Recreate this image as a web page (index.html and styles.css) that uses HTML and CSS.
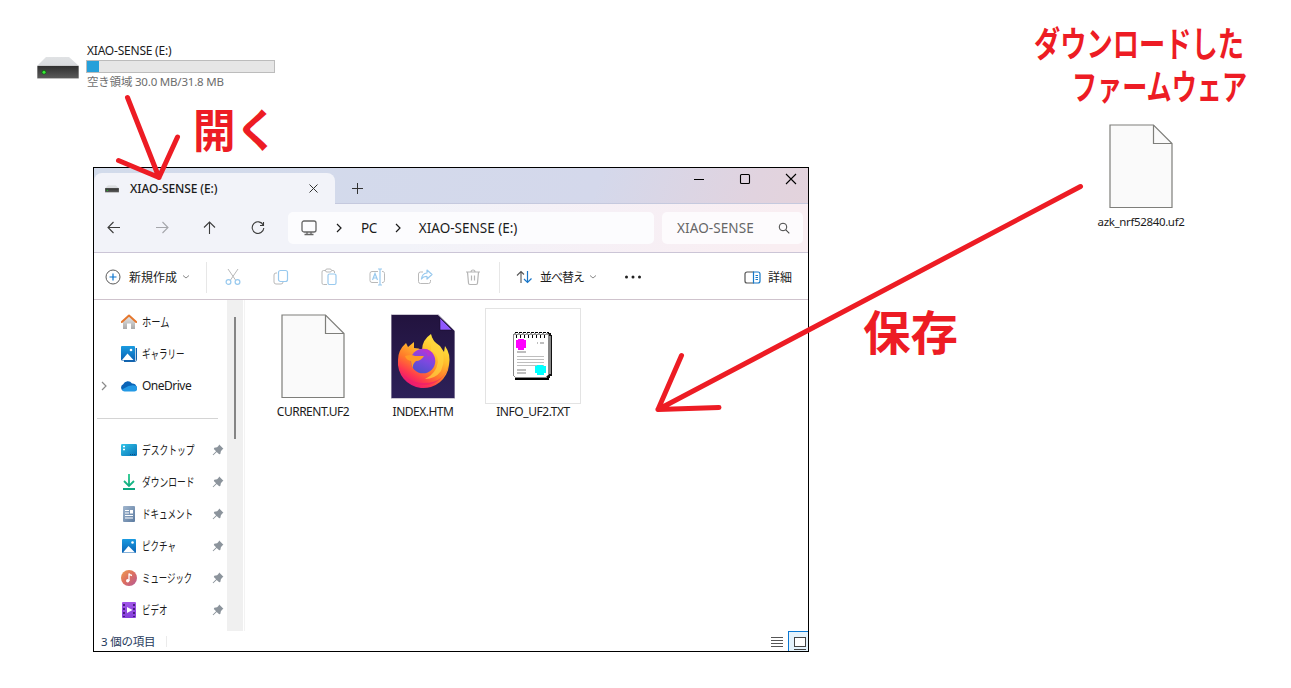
FILE: index.html
```html
<!DOCTYPE html>
<html lang="ja">
<head>
<meta charset="utf-8">
<title>XIAO-SENSE</title>
<link rel="stylesheet" href="styles.css">
</head>
<body>
<svg width="0" height="0" class="defs">
  <defs>
    <linearGradient id="gTop" x1="0" y1="0" x2="0" y2="1"><stop offset="0" stop-color="#e0e2e4"/><stop offset="1" stop-color="#d8dade"/></linearGradient>
    <linearGradient id="gFront" x1="0" y1="0" x2="0" y2="1"><stop offset="0" stop-color="#303030"/><stop offset="1" stop-color="#5a5a5a"/></linearGradient>
    <linearGradient id="gBlue" x1="0" y1="0" x2="0" y2="1"><stop offset="0" stop-color="#1a9be0"/><stop offset="1" stop-color="#0a62b4"/></linearGradient>
    <linearGradient id="gDesk" x1="0" y1="0" x2="1" y2="1"><stop offset="0" stop-color="#32c5e8"/><stop offset="1" stop-color="#0873b8"/></linearGradient>
    <linearGradient id="gDown" gradientUnits="userSpaceOnUse" x1="0" y1="0" x2="0" y2="16"><stop offset="0" stop-color="#25c98c"/><stop offset="1" stop-color="#0ba47e"/></linearGradient>
    <linearGradient id="gDoc" x1="0" y1="0" x2="1" y2="1"><stop offset="0" stop-color="#a1b6ce"/><stop offset="1" stop-color="#5c7ba0"/></linearGradient>
    <linearGradient id="gMusic" x1="0" y1="0" x2="1" y2="1"><stop offset="0" stop-color="#f0a050"/><stop offset=".5" stop-color="#db6d61"/><stop offset="1" stop-color="#b45a9a"/></linearGradient>
    <linearGradient id="gVideo" x1="0" y1="0" x2="0" y2="1"><stop offset="0" stop-color="#a155e8"/><stop offset="1" stop-color="#8540da"/></linearGradient>
    <linearGradient id="gHouse" x1="0" y1="0" x2="0" y2="1"><stop offset="0" stop-color="#e8e8e8"/><stop offset="1" stop-color="#a9a9a9"/></linearGradient>
    <linearGradient id="gNight" x1="0" y1="0" x2="0" y2="1"><stop offset="0" stop-color="#22133e"/><stop offset="1" stop-color="#2d2159"/></linearGradient>
    <linearGradient id="gFlame" x1=".85" y1=".05" x2=".3" y2="1"><stop offset="0" stop-color="#fff044"/><stop offset=".35" stop-color="#ffbd2c"/><stop offset=".62" stop-color="#ff7a2a"/><stop offset=".82" stop-color="#ff3750"/><stop offset="1" stop-color="#e5127a"/></linearGradient>
    <linearGradient id="gGlobe" x1=".7" y1="0" x2=".3" y2="1"><stop offset="0" stop-color="#b833d8"/><stop offset=".5" stop-color="#7a49df"/><stop offset="1" stop-color="#4c50c9"/></linearGradient>
    <symbol id="drive" viewBox="0 0 42 23">
      <path d="M9 0H32L42 9H0Z" fill="url(#gTop)"/>
      <rect y="8.5" width="42" height="13.5" rx="1" fill="#bcbcbc"/>
      <rect x=".5" y="9" width="41" height="12" fill="url(#gFront)"/>
      <circle cx="7" cy="15.2" r="2.4" fill="#18651b"/><circle cx="7" cy="15.2" r="1.5" fill="#37ed36"/>
    </symbol>
    <symbol id="page" viewBox="0 0 64 85">
      <path d="M1 1H44.500L63 19.500V83.500H1Z" fill="#fafafa" stroke="#7e7e7a" stroke-width="1.200"/>
      <path d="M44.500 1V19.500H63" fill="none" stroke="#7e7e7a" stroke-width="1.200"/>
    </symbol>
    <symbol id="pin" viewBox="0 0 12 12">
      <path d="M7.200 .6L11.400 4.800L10.300 5.600L8.900 7.200L8.300 10L7.200 10.300L4.700 7.900L1.300 11.200L.6 10.700L4.100 7.200L1.800 4.900L2.300 3.800L5.100 3.200L6.600 1.800Z" fill="#8c949c"/>
    </symbol>
    <symbol id="chev" viewBox="0 0 8 8"><path d="M1 2.500L4 5L7 2.500" fill="none" stroke="#8a8a8a"/></symbol>
    <symbol id="next" viewBox="0 0 8 10"><path d="M2 1L6 5L2 9" fill="none" stroke="currentColor" stroke-width="1.200"/></symbol>
  </defs>
</svg>

<main class="canvas">
  <section class="drive">
    <svg class="drive-icon"><use href="#drive"/></svg>
    <div class="drive-info">
      <div class="drive-name">XIAO-SENSE (E:)</div>
      <div class="meter"><div class="meter-fill"></div></div>
      <div class="drive-free"><span class="cjk">空き領域</span> 30.0 MB/31.8 MB</div>
    </div>
  </section>

  <section class="window">
    <header class="titlebar">
      <div class="tab">
        <svg class="tab-icon"><use href="#drive"/></svg>
        <span class="tab-title">XIAO-SENSE (E:)</span>
        <svg class="tab-close" viewBox="0 0 9 9"><path d="M.5 .5L8.500 8.500M8.500 .5L.5 8.500" stroke="#333" stroke-width="1"/></svg>
      </div>
      <svg class="new-tab" viewBox="0 0 11 11"><path d="M5.500 0V11M0 5.500H11" stroke="#333"/></svg>
      <div class="controls">
        <svg viewBox="0 0 12 12"><path d="M1 6.500H11" stroke="#000"/></svg>
        <svg viewBox="0 0 12 12"><rect x="1.500" y="1.500" width="9" height="9" rx="1" fill="none" stroke="#000" stroke-width="1.100"/></svg>
        <svg viewBox="0 0 12 12"><path d="M1 1L11 11M11 1L1 11" stroke="#000" stroke-width="1.100"/></svg>
      </div>
    </header>

    <nav class="address-row">
      <div class="nav-buttons">
        <svg viewBox="0 0 16 16"><path d="M14 7.500H2M7.500 2L2 7.500L7.500 13" class="ink"/></svg>
        <svg viewBox="0 0 16 16"><path d="M2 7.500H14M8.500 2L14 7.500L8.500 13" class="ink faded"/></svg>
        <svg viewBox="0 0 16 16"><path d="M7.500 14V2M2 7.500L7.500 2L13 7.500" class="ink"/></svg>
        <svg viewBox="0 0 16 16"><path d="M13.200 5A5.800 5.800 0 1 0 13.800 8M13.500 2V5.500H10" class="ink"/></svg>
      </div>
      <div class="crumbs">
        <svg class="pc" viewBox="0 0 16 16"><rect x="1" y="1" width="14" height="11" rx="2" fill="none" stroke="#666" stroke-width="1.300"/><path d="M6 12V14.500M10 12V14.500M3.500 14.500H12.500" stroke="#666" stroke-width="1.300"/></svg>
        <svg class="next"><use href="#next"/></svg>
        <span>PC</span>
        <svg class="next"><use href="#next"/></svg>
        <span class="crumb-drive">XIAO-SENSE (E:)</span>
      </div>
      <div class="search">
        <span>XIAO-SENSE</span>
        <svg viewBox="0 0 12 12"><circle cx="5" cy="5" r="3.800" fill="none" stroke="#444"/><path d="M7.800 7.800L11.300 11.300" stroke="#444" stroke-width="1.100"/></svg>
      </div>
    </nav>

    <div class="toolbar">
      <div class="new">
        <svg viewBox="0 0 16 16"><circle cx="8" cy="8" r="7" fill="none" stroke="#5b5b5b"/><path d="M8 4.500V11.500M4.500 8H11.500" stroke="#0a74cf" stroke-width="1.200"/></svg>
        <span class="cjk">新規作成</span>
        <svg class="chev"><use href="#chev"/></svg>
      </div>
      <div class="actions">
        <svg viewBox="0 0 18 18"><path d="M4 1L11.500 12M14 1L6.500 12" fill="none" stroke="#b9b9b9"/><circle cx="4.500" cy="14" r="2.400" fill="none" stroke="#98c9ee" stroke-width="1.200"/><circle cx="13.500" cy="14" r="2.400" fill="none" stroke="#98c9ee" stroke-width="1.200"/></svg>
        <svg viewBox="0 0 18 18"><path d="M5 5H4A2 2 0 0 0 2 7V14A2 2 0 0 0 4 16H9A2 2 0 0 0 11 14" fill="none" stroke="#b9b9b9"/><rect x="6.500" y="2.500" width="9" height="11" rx="2" fill="none" stroke="#98c9ee" stroke-width="1.200"/></svg>
        <svg viewBox="0 0 18 18"><path d="M6 2.500H3.500A1.500 1.500 0 0 0 2 4V15A1.500 1.500 0 0 0 3.500 16.500H7M12 2.500H13A1.500 1.500 0 0 1 14.500 4V5" fill="none" stroke="#b9b9b9"/><rect x="5.500" y="1" width="6" height="3" rx="1.500" fill="none" stroke="#b9b9b9"/><rect x="8" y="6" width="8" height="10.500" rx="1.500" fill="none" stroke="#98c9ee" stroke-width="1.200"/></svg>
        <svg viewBox="0 0 18 18"><path d="M10 3.500H4A2 2 0 0 0 2 5.500V12.500A2 2 0 0 0 4 14.500H10M14 3.500A2 2 0 0 1 16.500 5.500V12.500A2 2 0 0 1 14 14.500" fill="none" stroke="#b9b9b9"/><path d="M12 1V17M10 1H14M10 17H14M4.500 12L7 5.500L9.500 12M5.500 10H8.500" fill="none" stroke="#98c9ee" stroke-width="1.200"/></svg>
        <svg viewBox="0 0 18 18"><path d="M7 4H4.500A2 2 0 0 0 2.500 6V13.500A2 2 0 0 0 4.500 15.500H12.500A2 2 0 0 0 14.500 13.500V12" fill="none" stroke="#b9b9b9"/><path d="M11 2L16 6.500L11 11V8.500Q7.500 8.200 5.500 11Q6 5.500 11 5Z" fill="none" stroke="#98c9ee" stroke-width="1.200" stroke-linejoin="round"/></svg>
        <svg viewBox="0 0 18 18"><path d="M2 4H16M3.500 4L4.500 15A1.500 1.500 0 0 0 6 16.500H12A1.500 1.500 0 0 0 13.500 15L14.500 4M7 4A2 2 0 0 1 11 4M7.500 7.500V12.500M10.500 7.500V12.500" fill="none" stroke="#b5b5b5" stroke-width="1.200"/></svg>
      </div>
      <div class="sort">
        <svg viewBox="0 0 16 16"><path d="M5 14V2.500M1 6.500L5 2.500L8 5.500" fill="none" stroke="#555" stroke-width="1.100"/><path d="M11.500 2V13.500M8 10L11.500 13.500L15.500 9.500" fill="none" stroke="#1976c8" stroke-width="1.200"/></svg>
        <span class="cjk">並べ替え</span>
        <svg class="chev"><use href="#chev"/></svg>
      </div>
      <svg class="more" viewBox="0 0 18 4"><circle cx="2.500" cy="2" r="1.500"/><circle cx="9" cy="2" r="1.500"/><circle cx="15.500" cy="2" r="1.500"/></svg>
      <div class="details">
        <svg viewBox="0 0 17 13"><path d="M10 1H3A2 2 0 0 0 1 3V10A2 2 0 0 0 3 12H10" fill="none" stroke="#555" stroke-width="1.200"/><path d="M9.500 1H14A2 2 0 0 1 16 3V10A2 2 0 0 1 14 12H9.500ZM11.500 4.500H14M11.500 6.500H14M11.500 8.500H14" fill="none" stroke="#1679c9" stroke-width="1.200"/></svg>
        <span class="cjk">詳細</span>
      </div>
    </div>

    <div class="content">
      <aside class="sidebar">
        <div class="item"><i></i>
          <svg viewBox="0 0 16 16"><path d="M2 7L8 2L14 7V15H10V9.500H6V15H2Z" fill="url(#gHouse)"/><path d="M.8 8L8 1.500L15.200 8" fill="none" stroke="#e5772e" stroke-width="2" stroke-linejoin="round" stroke-linecap="round"/></svg>
          <span class="kana w77">ホーム</span></div>
        <div class="item"><i></i>
          <svg viewBox="0 0 16 16"><path d="M4 2H16V13A3 3 0 0 1 13 16H3V14H14V2Z" fill="#1464ad"/><rect x="0" y="0" width="14" height="14.500" rx="1" fill="url(#gBlue)"/><rect x="14" y="2" width=".7" height="13" fill="#fff"/><path d="M1 14L6.500 7.500L12.500 14Z" fill="#fff"/><circle cx="10" cy="4" r="1.300" fill="#fff"/></svg>
          <span class="kana w71">ギャラリー</span></div>
        <div class="item"><svg class="expand"><use href="#next"/></svg>
          <svg viewBox="0 0 16 16"><path d="M3.500 13A3.500 3.500 0 0 1 2.200 6.300A5 5 0 0 1 11 5.500A4 4 0 0 1 13.500 13Z" fill="#0a64b7"/><path d="M3.500 13.500A3 3 0 0 1 1 11.500L7.500 8L10.500 7.600A4 4 0 0 1 13 7.500A3 3 0 0 1 13.500 13.500Z" fill="#2399e5"/></svg>
          <span class="latin">OneDrive</span></div>
        <div class="rule"></div>
        <div class="item"><i></i>
          <svg viewBox="0 0 16 16"><rect y="2" width="16" height="12" rx="1.200" fill="url(#gDesk)"/><path d="M2 4.500H4M2 7.500H4" stroke="#fff" stroke-width="1.300"/><path d="M9 12.500H14" stroke="#0b4f84" stroke-dasharray="1 1"/></svg>
          <span class="kana w73">デスクトップ</span><svg class="pin"><use href="#pin"/></svg></div>
        <div class="item"><i></i>
          <svg viewBox="0 0 16 16"><path d="M8 0V12M3 7L8 12L13 7M2 15H14" fill="none" stroke="url(#gDown)" stroke-width="1.800"/></svg>
          <span class="kana w73">ダウンロード</span><svg class="pin"><use href="#pin"/></svg></div>
        <div class="item"><i></i>
          <svg viewBox="0 0 16 16"><rect x="2" width="12" height="16" rx="1" fill="url(#gDoc)"/><path d="M4 4.500H8M4 7H8M4 9.500H12M4 12H12" stroke="#fff" stroke-width="1.100"/><rect x="9" y="4" width="3" height="3.500" fill="#fff"/></svg>
          <span class="kana w71">ドキュメント</span><svg class="pin"><use href="#pin"/></svg></div>
        <div class="item"><i></i>
          <svg viewBox="0 0 16 16"><rect x="1" y="1" width="14" height="14" rx="1" fill="url(#gBlue)"/><path d="M2 14.500L7.500 8L14 14.500Z" fill="#fff"/><circle cx="11.500" cy="4.500" r="1.300" fill="#fff"/></svg>
          <span class="kana w71">ピクチャ</span><svg class="pin"><use href="#pin"/></svg></div>
        <div class="item"><i></i>
          <svg viewBox="0 0 16 16"><circle cx="8" cy="8" r="8" fill="url(#gMusic)"/><circle cx="6.700" cy="10.700" r="1.700" fill="#fff"/><path d="M8 11V3.500Q8.500 5 11 5.500" fill="none" stroke="#fff" stroke-width="1.300"/></svg>
          <span class="kana w70">ミュージック</span><svg class="pin"><use href="#pin"/></svg></div>
        <div class="item"><i></i>
          <svg viewBox="0 0 16 16"><rect x="1" y="0" width="14" height="16" rx="1" fill="url(#gVideo)"/><path d="M3 2V15M13 2V15" stroke="#3c166f" stroke-width="1.700" stroke-dasharray="2 2"/><path d="M6 5L11.500 8L6 11Z" fill="#fff"/></svg>
          <span class="kana w71">ビデオ</span><svg class="pin"><use href="#pin"/></svg></div>
      </aside>
      <div class="track"><div class="thumb"></div></div>
      <div class="files">
        <figure class="file"><div class="thumbbox"><svg class="page"><use href="#page"/></svg></div><figcaption>CURRENT.UF2</figcaption></figure>
        <figure class="file"><div class="thumbbox">
          <svg class="page" viewBox="0 0 64 85">
            <path d="M0 .5H47L64 17V84.500H0Z" fill="url(#gNight)" stroke="#cbc7d2" stroke-width="1"/>
            <path d="M49 4V16H61Z" fill="#9059ff" stroke="#170b2d" stroke-width=".6"/>
            <path d="M7 46Q7 36 15 29L17 33L23 28L23 34Q28 34 31 36Q31 26 40 20Q41 27 49 32L53 38L54 32Q60 40 58 51A25.500 25.500 0 0 1 7 46Z" fill="url(#gFlame)"/>
            <path d="M8 51A24 22 0 0 0 32 69Q53 70 58 50A25.500 25.500 0 0 1 8 51Z" fill="#ec1b72" opacity=".6"/>
            <path d="M40 21Q41 28 49 33Q56 43 50 57Q44 65 34 65Q45 60 47 48Q47 40 40 37Z" fill="#ffd33d" opacity=".75"/>
            <circle cx="32" cy="47" r="12.300" fill="url(#gGlobe)"/>
            <path d="M14 42Q20 40 24 42L33 42Q30 47 25 47Q21 50 22 55Q20 51 20 47Q15 46 14 42Z" fill="#ff9b27"/>
            <path d="M31 36Q36 33 42 40L38 39Q40 42 37 42Q35 37 31 36Z" fill="#b634cf"/>
          </svg></div><figcaption class="cap-index">INDEX.HTM</figcaption></figure>
        <figure class="file"><div class="thumbbox framed">
          <svg class="note" viewBox="0 0 42 50" shape-rendering="crispEdges">
            <path d="M3 45H37V49H3Z" fill="#000"/><path d="M36 2H39V4H40V45H38V47H35V5H36Z" fill="#111"/><path d="M37 5H39V43H37Z" fill="#888"/>
            <path d="M1.500 3.500H36.500V43.500L34 46.500H3.500L1.500 44.500Z" fill="#fff" stroke="#888"/>
            <path d="M3 1.500H37" stroke="#000" stroke-dasharray="3 1"/><path d="M2 3H37" stroke="#999" stroke-width="2" stroke-dasharray="2 2"/><path d="M4 5H36" stroke="#000" stroke-width="3" stroke-dasharray="1 3"/>
            <path d="M6 8H12V9H14V17H12V19H6V17H4V9H6Z" fill="#f0f"/>
            <path d="M25 12H26M28 12H32M5 21H14M5 39H14M5 42H14" stroke="#bebebe" stroke-width="2"/>
            <path d="M5 25.500H32M5 28.500H32M5 31.500H32M5 34.500H32" stroke="#bebebe"/>
            <path d="M25 34H31V35H34V42H32V44H25V42H23V35H25Z" fill="#0ff"/>
          </svg></div><figcaption class="cap-info">INFO_UF2.TXT</figcaption></figure>
      </div>
    </div>

    <footer class="status">
      <span class="count cjk">3 個の項目</span>
      <div class="views">
        <svg class="list" viewBox="0 0 12 12"><path d="M0 1.500H12M0 4.500H12M0 7.500H12M0 10.500H12" stroke="#555"/></svg>
        <div class="large"><svg viewBox="0 0 12 13"><rect x=".5" y=".5" width="11" height="9" fill="#fff" stroke="#444"/><path d="M0 12.500H12" stroke="#444"/></svg></div>
      </div>
    </footer>
  </section>

  <figure class="download">
    <svg class="page"><use href="#page"/></svg>
    <figcaption>azk_nrf52840.uf2</figcaption>
  </figure>

  <svg class="notes" viewBox="0 0 1291 688">
    <g class="strokes">
      <path d="M127.500 97.500L159 177.500M118.500 160.500L159 177.500L177.500 137"/>
      <path d="M1080.500 186.500L658 409.500M681.500 355.500L658 409.500L719 407.500"/>
    </g>
    <g class="labels">
      <text x="193" y="147" font-size="46" textLength="85" lengthAdjust="spacingAndGlyphs">開く</text>
      <text x="863" y="350" font-size="47" textLength="95" lengthAdjust="spacingAndGlyphs">保存</text>
      <text x="1034" y="57" font-size="35" textLength="210" lengthAdjust="spacingAndGlyphs">ダウンロードした</text>
      <text x="1072" y="100" font-size="35" textLength="175" lengthAdjust="spacingAndGlyphs">ファームウェア</text>
    </g>
  </svg>
</main>
</body>
</html>
```
FILE: styles.css
```css
* { box-sizing: border-box; }
body { margin: 0; background: #fff; color: #1b1b1b; font: 12px/16px "Noto Sans", "Noto Sans CJK JP", sans-serif; overflow: hidden; }
.defs { position: absolute; }
svg { display: block; flex: none; }
figure { margin: 0; }
span { white-space: nowrap; }
.cjk { font-family: "Noto Sans", "Noto Sans CJK JP", sans-serif; }
.canvas { position: relative; width: 1291px; height: 688px; overflow: hidden; }

.drive { position: absolute; left: 37px; top: 42px; display: flex; gap: 7px; }
.drive-icon { width: 42px; height: 23px; margin-top: 15px; }
.drive-info { width: 189px; }
.drive-name { padding-left: 1px; height: 18px; line-height: 18px; letter-spacing: -.22px; white-space: nowrap; }
.meter { height: 13px; border: 1px solid #bcbcbc; background: #e6e6e6; }
.meter-fill { width: 12px; height: 11px; background: #26a0da; }
.drive-free { padding-left: 1px; height: 18px; line-height: 18px; color: #6d6d6d; letter-spacing: -.2px; font-size: 11.500px; white-space: nowrap; }

.window { position: absolute; left: 93px; top: 167px; width: 716px; height: 485px; border: 1px solid #000; background: #fff; display: grid; grid-template-rows: 36px 49px 47px 331px 20px; }
.titlebar { display: flex; background: linear-gradient(110deg, #d2dbeb 0%, #d4d8eb 70%, #e1d3df 92%, #e3d3dc 100%); border-bottom: 1px solid #c5c9de; }
.tab { width: 241px; height: 31px; margin-top: 5px; padding: 0 17px 0 11px; display: flex; align-items: center; background: #f2f3f9; border-radius: 8px 8px 0 0; }
.tab-icon { width: 14px; height: 8px; }
.tab-title { margin-left: 11px; flex: 1; font-weight: 500; letter-spacing: -.1px; }
.tab-close { width: 9px; height: 9px; }
.new-tab { width: 11px; height: 11px; margin: 15px 0 0 17px; }
.controls { margin: 5px 11px 0 auto; display: flex; gap: 34px; }
.controls svg { width: 12px; height: 12px; }

.address-row { display: flex; padding: 8px 5px 8px 12px; background: linear-gradient(110deg, #f2f3f9 45%, #f6f0f6 70%, #f9eef2 95%); border-bottom: 1px solid #cbc5d6; font-size: 13.500px; }
.nav-buttons { width: 182px; display: flex; gap: 32px; align-items: center; }
.nav-buttons svg { width: 16px; height: 16px; }
.ink { fill: none; stroke: #3c3c3c; stroke-width: 1.100; }
.faded { stroke: #a5a6ab; }
.crumbs { width: 366px; display: flex; align-items: center; padding-left: 13px; background: #fcfcfe; border-radius: 5px; letter-spacing: -.45px; }
.crumb-drive { letter-spacing: 0; }
.pc { width: 16px; height: 16px; }
.next { width: 8px; height: 10px; }
.pc + .next { margin: 0 18px; }
span + .next { margin: 0 17px; }
.search { flex: 1; margin-left: 8px; padding: 0 13px 0 15px; display: flex; align-items: center; justify-content: space-between; background: #fdfbfd; border-radius: 5px; color: #666; letter-spacing: .1px; }
.search svg { width: 12px; height: 12px; }

.toolbar { display: grid; grid-template-columns: 113px 293px 124px 18px 1fr; align-items: center; padding-top: 2px; border-bottom: 1px solid #cfc3cd; }
.new { display: flex; align-items: center; height: 31px; padding-left: 11px; border-right: 1px solid #e7e7e7; }
.new > svg:first-child { width: 16px; height: 16px; margin-right: 8px; }
.new span, .sort span, .details span { padding-top: 1px; }
.new span { width: 53px; }
.chev { width: 8px; height: 8px; }
.actions { display: flex; gap: 30px; align-items: center; height: 31px; padding-left: 17px; border-right: 1px solid #e7e7e7; }
.actions svg { width: 18px; height: 18px; }
.sort { display: flex; align-items: center; padding-left: 16px; }
.sort > svg:first-child { width: 16px; height: 16px; margin-right: 8px; }
.sort span { width: 49px; letter-spacing: -1px; }
.more { width: 18px; height: 4px; fill: #222; }
.details { display: flex; align-items: center; justify-content: flex-end; gap: 7px; padding-right: 16px; }
.details svg { width: 17px; height: 13px; }

.content { display: grid; grid-template-columns: 133px 16px 1fr; }
.sidebar { padding-top: 6px; overflow: hidden; }
.item { display: grid; grid-template-columns: 27px 21px minmax(0, 1fr) 12px; align-items: center; height: 32px; padding-right: 3px; }
.item > svg:nth-child(2) { width: 16px; height: 16px; }
.expand { width: 8px; height: 10px; margin-left: 6px; color: #8a8a8a; }
.pin { width: 12px; height: 12px; }
.kana { justify-self: start; transform-origin: 0 50%; font-family: "Noto Sans CJK JP", sans-serif; }
.w70 { transform: scaleX(.7); }
.w71 { transform: scaleX(.71); }
.w73 { transform: scaleX(.73); }
.w77 { transform: scaleX(.77); }
.latin { letter-spacing: -.5px; }
.rule { height: 1px; margin: 16px 9px 15px 3px; background: #d4d4d4; }
.track { background: #f0f0f0; padding: 17px 0 0 7px; }
.thumb { width: 2px; height: 122px; background: #858585; }
.files { display: grid; grid-template-columns: repeat(3, 110px); align-content: start; margin-left: 1px; padding: 8px 0 0 13px; border-left: 1px solid #f3f3f3; }
.file { display: flex; flex-direction: column; align-items: center; }
.thumbbox { width: 96px; height: 96px; display: grid; place-items: center; }
.framed { border: 1px solid #e3e3e3; }
.page { width: 64px; height: 85px; }
.note { width: 42px; height: 50px; }
figcaption { letter-spacing: -.5px; white-space: nowrap; }
.cap-info { letter-spacing: -.42px; }

.status { display: flex; align-items: center; justify-content: space-between; padding-left: 7px; color: #1e395b; font-size: 11.500px; }
.count { width: 66px; height: 11px; margin-top: 1px; line-height: 12px; letter-spacing: -.2px; border-right: 1px solid #ebebeb; }
.views { display: flex; gap: 5px; align-items: center; align-self: stretch; }
.list { width: 12px; height: 12px; margin-top: 1px; }
.large { width: 20px; height: 20px; padding: 5px 0 0 5px; background: #e5f3fc; border-top: 1px solid #0a78d4; border-left: 1px solid #0a78d4; }
.large svg { width: 12px; height: 13px; }

.download { position: absolute; left: 1091px; top: 124px; width: 100px; display: flex; flex-direction: column; align-items: center; gap: 5px; font-size: 11.500px; }
.download figcaption { letter-spacing: -.35px; }
.notes { position: absolute; left: 0; top: 0; width: 1291px; height: 688px; }
.strokes { fill: none; stroke: #ed1c24; stroke-width: 5; stroke-linecap: round; stroke-linejoin: round; }
.labels { fill: #ed1c24; font-family: "Noto Sans CJK JP", sans-serif; font-weight: 700; }
```
